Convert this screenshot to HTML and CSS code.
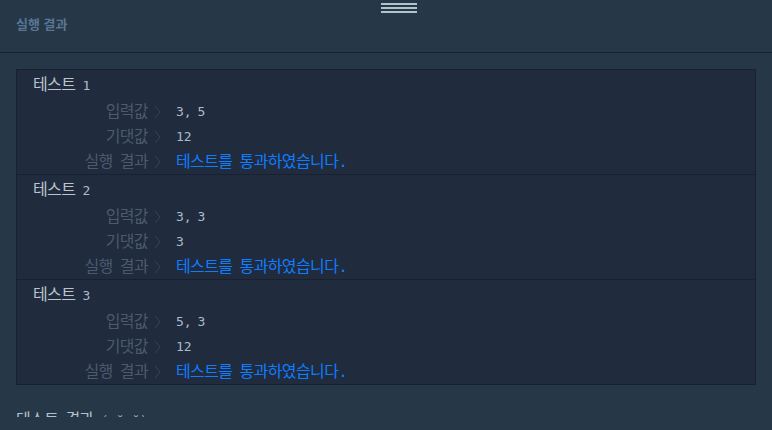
FILE: index.html
```html
<!DOCTYPE html>
<html lang="ko">
<head>
<meta charset="utf-8">
<link rel="stylesheet" href="styles.css">
</head>
<body>
<div class="panel">
  <div class="handle"><span></span><span></span><span></span></div>
  <div class="panel-header">실행 결과</div>
  <div class="console">
    <div class="results">
      <div class="test">
        <div class="test-title">테스트 <span class="num">1</span></div>
        <div class="line"><span class="label">입력값</span><span class="chev"><svg width="7" height="14" viewBox="0 0 7 14"><polyline points="1,1 6,7 1,13" fill="none" stroke="currentColor" stroke-width="1"/></svg></span><span class="value">3, 5</span></div>
        <div class="line"><span class="label">기댓값</span><span class="chev"><svg width="7" height="14" viewBox="0 0 7 14"><polyline points="1,1 6,7 1,13" fill="none" stroke="currentColor" stroke-width="1"/></svg></span><span class="value">12</span></div>
        <div class="line"><span class="label">실행 결과</span><span class="chev"><svg width="7" height="14" viewBox="0 0 7 14"><polyline points="1,1 6,7 1,13" fill="none" stroke="currentColor" stroke-width="1"/></svg></span><span class="pass">테스트를 통과하였습니다.</span></div>
      </div>
      <div class="test">
        <div class="test-title">테스트 <span class="num">2</span></div>
        <div class="line"><span class="label">입력값</span><span class="chev"><svg width="7" height="14" viewBox="0 0 7 14"><polyline points="1,1 6,7 1,13" fill="none" stroke="currentColor" stroke-width="1"/></svg></span><span class="value">3, 3</span></div>
        <div class="line"><span class="label">기댓값</span><span class="chev"><svg width="7" height="14" viewBox="0 0 7 14"><polyline points="1,1 6,7 1,13" fill="none" stroke="currentColor" stroke-width="1"/></svg></span><span class="value">3</span></div>
        <div class="line"><span class="label">실행 결과</span><span class="chev"><svg width="7" height="14" viewBox="0 0 7 14"><polyline points="1,1 6,7 1,13" fill="none" stroke="currentColor" stroke-width="1"/></svg></span><span class="pass">테스트를 통과하였습니다.</span></div>
      </div>
      <div class="test">
        <div class="test-title">테스트 <span class="num">3</span></div>
        <div class="line"><span class="label">입력값</span><span class="chev"><svg width="7" height="14" viewBox="0 0 7 14"><polyline points="1,1 6,7 1,13" fill="none" stroke="currentColor" stroke-width="1"/></svg></span><span class="value">5, 3</span></div>
        <div class="line"><span class="label">기댓값</span><span class="chev"><svg width="7" height="14" viewBox="0 0 7 14"><polyline points="1,1 6,7 1,13" fill="none" stroke="currentColor" stroke-width="1"/></svg></span><span class="value">12</span></div>
        <div class="line"><span class="label">실행 결과</span><span class="chev"><svg width="7" height="14" viewBox="0 0 7 14"><polyline points="1,1 6,7 1,13" fill="none" stroke="currentColor" stroke-width="1"/></svg></span><span class="pass">테스트를 통과하였습니다.</span></div>
      </div>
    </div>
    <div class="summary">테스트 결과 <span class="face">(~˘▾˘)~</span></div>
  </div>
</div>
</body>
</html>
```

FILE: styles.css
```css
html, body {
  margin: 0;
  padding: 0;
  background: #263747;
  overflow: hidden;
}
.panel {
  position: relative;
  width: 772px;
  height: 430px;
  background: #263747;
}
.handle {
  position: absolute;
  left: 381px;
  top: 3px;
  width: 36px;
  display: flex;
  flex-direction: column;
  gap: 2px;
}
.handle span {
  display: block;
  height: 2px;
  background: #b4c2cc;
}
.panel-header {
  height: 53px;
  box-sizing: border-box;
  border-bottom: 1px solid #172131;
  padding: 15px 16px 0;
  font-family: "Noto Sans CJK KR", "Noto Sans", sans-serif;
  font-weight: 700;
  font-size: 13px;
  line-height: 18px;
  color: #587693;
}
.console {
  height: 364px;
  box-sizing: border-box;
  overflow: hidden;
  padding: 16px 16px 0;
  font-family: "DejaVu Sans Mono", "Noto Sans CJK KR", monospace;
  font-size: 16px;
  letter-spacing: -0.6px;
  word-spacing: -2px;
}
.results {
  background: #202b3d;
  border: 1px solid #172131;
}
.test {
  border-bottom: 1px solid #172131;
  padding-top: 2px;
}
.test:last-child {
  border-bottom: none;
}
.test-title {
  height: 25px;
  line-height: 25px;
  overflow: hidden;
  padding-left: 16px;
  margin-bottom: 2px;
  color: #bcc5cf;
}
.test-title .num {
  font-size: 13px;
  letter-spacing: 0;
  color: #a9bccd;
}
.line {
  display: grid;
  grid-template-columns: 131px 28px 1fr;
  height: 25px;
  line-height: 25px;
}
.label {
  text-align: right;
  color: #4b5a6e;
}
.chev {
  color: #34445a;
  padding-left: 6px;
  display: flex;
  align-items: center;
}
.value {
  font-size: 13px;
  letter-spacing: 0;
  color: #a9bccd;
}
.pass {
  color: #0f7dff;
}
.summary {
  margin-top: 25px;
  line-height: 20px;
  color: #b4c2cc;
}
.face {
  font-size: 13px;
  letter-spacing: 0;
  color: #8fa3b6;
}
```
